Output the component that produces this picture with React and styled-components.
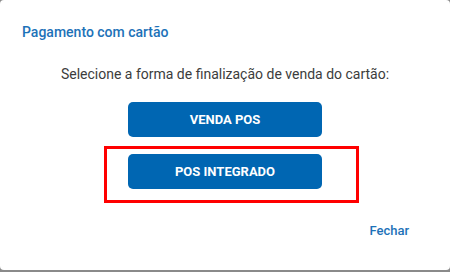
import React from 'react'
import styled, { createGlobalStyle } from 'styled-components'

const GlobalStyle = createGlobalStyle`
  html, body {
    margin: 0;
    padding: 0;
    background: #8a8a8a;
  }
  body {
    font-family: Roboto, "Noto Sans", Arial, sans-serif;
  }
`

const Dialog = styled.div`
  width: 450px;
  height: 270px;
  box-sizing: border-box;
  background: #fff;
  border-radius: 4px;
  display: flex;
  flex-direction: column;
  padding: 22px 22px 0 22px;
`

const Title = styled.h2`
  margin: 0;
  font-size: 14px;
  font-weight: 500;
  line-height: 20px;
  color: #1d72b8;
`

const Content = styled.div`
  display: flex;
  flex-direction: column;
  align-items: center;
  margin-top: 22px;
`

const Message = styled.p`
  margin: 0;
  font-size: 14px;
  line-height: 20px;
  color: #3c3c3c;
`

const Options = styled.div`
  display: flex;
  flex-direction: column;
  align-items: center;
  gap: 17px;
  margin-top: 18px;
`

// red annotation frame; negative margins keep it out of the flow
const Highlight = styled.div`
  border: 3px solid ${({ active }) => (active ? '#ff0000' : 'transparent')};
  padding: 5px 34px 11px 21px;
  margin: -8px -37px -14px -24px;
`

const OptionButton = styled.button`
  display: block;
  width: 194px;
  height: 35px;
  border: none;
  border-radius: 5px;
  background: #0066b2;
  color: #fff;
  font-family: Roboto, Arial, sans-serif;
  font-size: 13px;
  font-weight: 700;
  text-transform: uppercase;
  cursor: pointer;
`

const Footer = styled.div`
  display: flex;
  justify-content: flex-end;
  margin-top: 34px;
  padding-right: 19px;
`

const TextButton = styled.button`
  border: none;
  background: transparent;
  color: #1d72b8;
  font-family: Roboto, Arial, sans-serif;
  font-size: 13px;
  font-weight: 500;
  padding: 0;
  cursor: pointer;
`

const App = () => {
  return (
    <>
      <GlobalStyle />
      <Dialog>
        <Title>Pagamento com cartão</Title>
        <Content>
          <Message>Selecione a forma de finalização de venda do cartão:</Message>
          <Options>
            <OptionButton>Venda POS</OptionButton>
            <Highlight active>
              <OptionButton>POS Integrado</OptionButton>
            </Highlight>
          </Options>
        </Content>
        <Footer>
          <TextButton>Fechar</TextButton>
        </Footer>
      </Dialog>
    </>
  )
}

export default App
